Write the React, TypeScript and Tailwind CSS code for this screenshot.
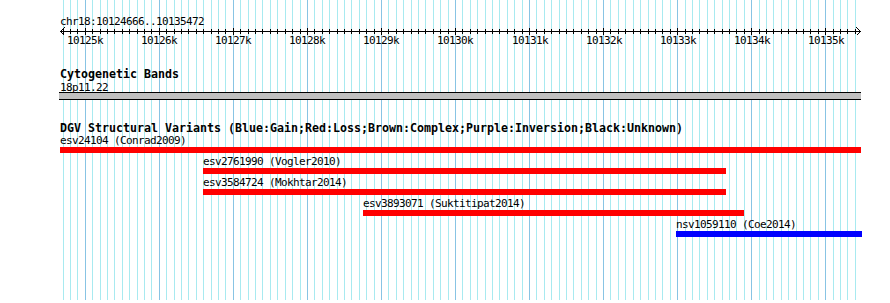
import React from "react";

const START = 10124666;
const X0 = 60.57;
const SCALE = 0.07404;
const px = (bp: number) => X0 + (bp - START) * SCALE;

const gridBps: number[] = [];
for (let bp = 10124700; bp <= 10135400; bp += 100) gridBps.push(bp);
const majors = gridBps.filter((b) => b % 1000 === 0);

type Feat = { label: string; x1: number; x2: number; color: string };
const feats: Feat[] = [
  { label: "esv24104 (Conrad2009)", x1: 60, x2: 861, color: "#ff0000" },
  { label: "esv2761990 (Vogler2010)", x1: 203, x2: 726, color: "#ff0000" },
  { label: "esv3584724 (Mokhtar2014)", x1: 203, x2: 726, color: "#ff0000" },
  { label: "esv3893071 (Suktitipat2014)", x1: 363, x2: 744, color: "#ff0000" },
  { label: "nsv1059110 (Coe2014)", x1: 676, x2: 862, color: "#0000ff" },
];

export default function App() {
  return (
    <div className="relative w-[890px] h-[303px] overflow-hidden bg-white text-black font-['DejaVu_Sans_Mono',monospace]">
      <svg
        className="absolute left-0 top-0"
        width={890}
        height={303}
        shapeRendering="crispEdges"
      >
        {gridBps.map((bp) => {
          const x = Math.floor(px(bp)) + 0.5;
          const major = bp % 1000 === 0;
          return (
            <line
              key={bp}
              x1={x}
              x2={x}
              y1={0}
              y2={300}
              stroke={major ? "#88c4e4" : "#a8eaf0"}
              strokeWidth={1}
            />
          );
        })}
        {/* ruler */}
        <line x1={60} x2={861} y1={31.5} y2={31.5} stroke="#000" />
        {gridBps.map((bp) => {
          const x = Math.floor(px(bp)) + 0.5;
          const major = bp % 1000 === 0;
          return (
            <line
              key={"t" + bp}
              x1={x}
              x2={x}
              y1={major ? 28 : 29}
              y2={major ? 35 : 34}
              stroke="#000"
            />
          );
        })}
        <polyline points="64.5,27.5 60.5,31.5 64.5,35.5" fill="none" stroke="#000" />
        <polyline points="856.5,27.5 860.5,31.5 856.5,35.5" fill="none" stroke="#000" />
      </svg>

      <div className="relative flex flex-col pl-[60px]">
        {/* ruler label */}
        <div className="mt-[15px] h-[13px] text-[11px] leading-[13px] tracking-[-0.62px] whitespace-nowrap">
          chr18:10124666..10135472
        </div>
        {/* tick labels */}
        <div className="relative mt-[6px] h-[13px] -ml-[60px] text-[11px] leading-[13px] tracking-[-0.62px] whitespace-nowrap">
          {majors.map((bp) => (
            <span
              key={bp}
              className="absolute top-0"
              style={{ left: Math.round(px(bp) - 18) }}
            >
              {bp / 1000}k
            </span>
          ))}
        </div>

        {/* Cytogenetic Bands */}
        <div className="mt-[21px] h-[13px] text-[11.63px] leading-[12px] font-bold whitespace-nowrap">
          Cytogenetic Bands
        </div>
        <div className="h-[11px] text-[11px] leading-[13px] tracking-[-0.62px] whitespace-nowrap">
          18p11.22
        </div>
        <div className="-ml-[1px] w-[802px] h-[8px] border-y border-black bg-[#c0c0c0]" />

        {/* DGV */}
        <div className="mt-[22px] h-[12px] text-[11.63px] leading-[12px] font-bold whitespace-nowrap">
          DGV Structural Variants (Blue:Gain;Red:Loss;Brown:Complex;Purple:Inversion;Black:Unknown)
        </div>
        <div className="mt-[1px] -ml-[60px] flex flex-col">
          {feats.map((f) => (
            <div key={f.label} className="flex flex-col mb-[3px]" style={{ paddingLeft: f.x1 }}>
              <div className="h-[12px] text-[11px] leading-[12px] tracking-[-0.62px] whitespace-nowrap">
                {f.label}
              </div>
              <div
                className="h-[6px]"
                style={{ width: f.x2 - f.x1, backgroundColor: f.color }}
              />
            </div>
          ))}
        </div>
      </div>
    </div>
  );
}
